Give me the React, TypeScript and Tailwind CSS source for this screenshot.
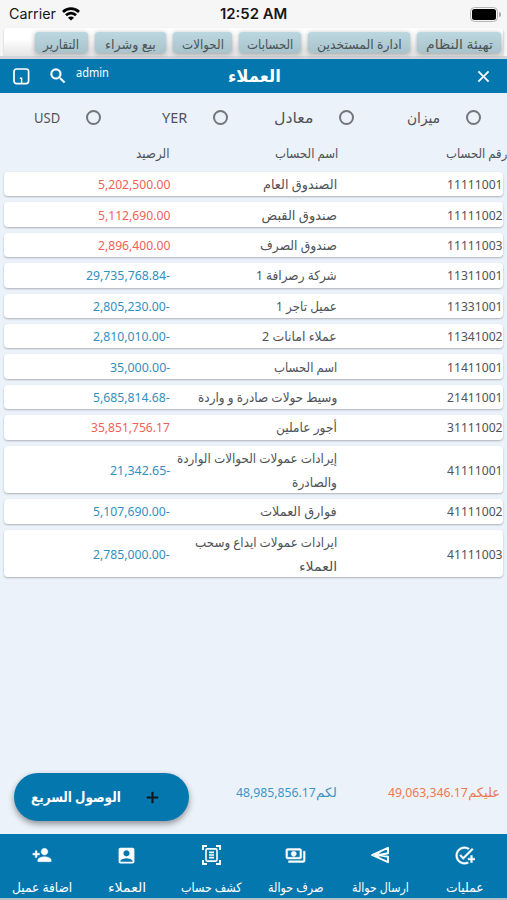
import { useLayoutEffect, useRef, useState, type ReactNode } from 'react';
import {
  MdAddTask, MdOutlinePayments, MdAccountBox, MdPersonAdd, MdSearch, MdClose, MdAdd,
} from 'react-icons/md';

/** One line of text, condensed or widened horizontally to a set width. */
function Fit({ w, children, ltr = false, className = '' }: { w: number; children: ReactNode; ltr?: boolean; className?: string }) {
  const ref = useRef<HTMLSpanElement>(null);
  const [s, setS] = useState(1);
  useLayoutEffect(() => {
    if (ref.current) setS(w / ref.current.offsetWidth);
  }, [w]);
  return (
    <span dir={ltr ? 'ltr' : 'rtl'} className={`block shrink-0 ${className}`} style={{ width: w }}>
      <span
        ref={ref}
        className={`inline-block whitespace-nowrap ${ltr ? 'origin-left' : 'origin-right'}`}
        style={{ transform: `scaleX(${s})` }}
      >
        {children}
      </span>
    </span>
  );
}

const SendIcon = () => (
  <svg width="20" height="20" viewBox="0 0 20 20" fill="none" stroke="#fff" strokeWidth="1.9" strokeLinejoin="round">
    <path d="M18 2.8 2 10l16 7.2v-5.4L9 10l9-1.8Z" />
    <path d="M11 7 3 10l8 3 -3-3Z" fill="#fff" stroke="none" />
  </svg>
);

const StatementIcon = () => (
  <svg width="19" height="20" viewBox="0 0 19 20" fill="none" stroke="#fff" strokeWidth="1.9">
    <path d="M1 5V1h4M14 1h4v4M18 15v4h-4M5 19H1v-4" />
    <rect x="4" y="3.9" width="11" height="12.2" rx="1.3" strokeWidth="1.6" />
    <path d="M7 7.4h5M7 10h5M7 12.6h5" strokeWidth="1.7" />
  </svg>
);

const chips: [string, number, number][] = [
  ['تهيئة النظام', 84, 67],
  ['ادارة المستخدين', 102, 85],
  ['الحسابات', 62, 46],
  ['الحوالات', 59, 42],
  ['بيع وشراء', 71, 51],
  ['التقارير', 53, 36],
];

const options: [string, number][] = [['ميزان', 33], ['معادل', 39], ['YER', 25], ['USD', 26]];

type Row = { no: string; name: [string, number][]; bal: string; w: number; red?: boolean };
const rows: Row[] = [
  { no: '11111001', name: [['الصندوق العام', 74]], bal: '5,202,500.00', w: 72, red: true },
  { no: '11111002', name: [['صندوق القبض', 76]], bal: '5,112,690.00', w: 72, red: true },
  { no: '11111003', name: [['صندوق الصرف', 77]], bal: '2,896,400.00', w: 72, red: true },
  { no: '11311001', name: [['شركة رصرافة 1', 81]], bal: '29,735,768.84-', w: 84 },
  { no: '11331001', name: [['عميل تاجر 1', 61]], bal: '2,805,230.00-', w: 77 },
  { no: '11341002', name: [['عملاء امانات 2', 75]], bal: '2,810,010.00-', w: 77 },
  { no: '11411001', name: [['اسم الحساب', 63]], bal: '35,000.00-', w: 60 },
  { no: '21411001', name: [['وسيط حولات صادرة و واردة', 139]], bal: '5,685,814.68-', w: 77 },
  { no: '31111002', name: [['أجور عاملين', 61]], bal: '35,851,756.17', w: 79, red: true },
  { no: '41111001', name: [['إيرادات عمولات الحوالات الواردة', 160], ['والصادرة', 45]], bal: '21,342.65-', w: 60 },
  { no: '41111002', name: [['فوارق العملات', 77]], bal: '5,107,690.00-', w: 77 },
  { no: '41111003', name: [['ايرادات عمولات ايداع وسحب', 142], ['العملاء', 38]], bal: '2,785,000.00-', w: 77 },
];

const tabs: [ReactNode, string, number][] = [
  [<MdAddTask size={21} className="[&>path:not([fill=none])]:stroke-white [&>path:not([fill=none])]:[stroke-width:0.5]" />, 'عمليات', 38],
  [<SendIcon />, 'ارسال حوالة', 57],
  [<MdOutlinePayments size={21} className="[&>path:not([fill=none])]:stroke-white [&>path:not([fill=none])]:[stroke-width:0.5]" />, 'صرف حوالة', 55],
  [<StatementIcon />, 'كشف حساب', 60],
  [<MdAccountBox size={21} />, 'العملاء', 38],
  [<MdPersonAdd size={20} className="[&>path:not([fill=none])]:stroke-white [&>path:not([fill=none])]:[stroke-width:0.5]" />, 'اضافة عميل', 60],
];

export default function App() {
  return (
    <div
      dir="rtl"
      className="flex h-[900px] w-[507px] flex-col overflow-hidden bg-[#ecf2fa] text-[14px] leading-[24px] text-[#505357] [font-family:'Noto_Sans','DejaVu_Sans',sans-serif]"
    >
      <div className="bg-[#f6f6f6]">
        <div dir="ltr" className="flex h-7 items-center justify-between pl-[9px] pr-[6px] text-[#161616] [font-family:Inter,sans-serif]">
          <div className="flex w-[158px] items-center gap-[6px]">
            <Fit ltr w={47} className="text-[14px]">Carrier</Fit>
            <svg width="18" height="14" viewBox="0 0 18 14" fill="none" stroke="#000" strokeWidth="2.7">
              <path d="M1 5a11.3 11.3 0 0 1 16 0" />
              <path d="M4 8.3a7 7 0 0 1 10 0" />
              <path d="M9 13.5 6 10.7a4.2 4.2 0 0 1 6 0Z" fill="#000" stroke="none" />
            </svg>
          </div>
          <Fit ltr w={67} className="text-[14px] font-semibold">12:52 AM</Fit>
          <div className="flex w-[162px] items-center justify-end gap-px">
            <div className="h-[15px] w-[28px] rounded-[4.5px] border-[1.5px] border-[#b5b5b5] p-px">
              <div className="h-full rounded-[2.5px] bg-black" />
            </div>
            <div className="h-[5px] w-[2px] rounded-r bg-[#aaa]" />
          </div>
        </div>
        <div className="mx-1 flex h-[28px] items-center gap-[7px] rounded-[3px] bg-linear-to-b from-white from-40% to-[#e4e4e4] pr-[2px] shadow-[0_1px_2px_#0004]">
          {chips.map(([t, w, tw]) => (
            <div
              key={t}
              className="flex h-[21px] shrink-0 items-center justify-center rounded-[3px] bg-linear-to-b from-[#bbd7df] to-[#a9c3cc] pt-[3px] text-[13px] text-[#4b5356] shadow-[0_1px_5px_#0005]"
              style={{ width: w }}
            >
              <Fit w={tw}>{t}</Fit>
            </div>
          ))}
        </div>
        <div className="h-[3px] bg-[#cfd5d9]" />
      </div>

      <header className="flex h-[34px] shrink-0 items-center bg-[#0577af] pl-[13px] pr-[14px] text-white">
        <div className="flex w-[171px] items-center">
          <MdClose size={19} className="[&>path:not([fill=none])]:stroke-white [&>path:not([fill=none])]:[stroke-width:0.5]" />
        </div>
        <div className="flex flex-1 justify-center">
          <Fit w={53} className="text-[17px] font-bold">العملاء</Fit>
        </div>
        <div dir="ltr" className="flex w-[173px] items-center">
          <svg width="17" height="17" viewBox="0 0 17 17" fill="none" stroke="#fff" strokeWidth="1.7">
            <rect x="1" y="1" width="14.6" height="14.6" rx="2.5" />
            <path d="M6.8 10.3h1.8V15" strokeWidth="1.4" />
          </svg>
          <MdSearch size={20} className="ml-[18px] [&>path:not([fill=none])]:stroke-white [&>path:not([fill=none])]:[stroke-width:0.5]" />
          <Fit ltr w={33} className="-mt-2 ml-2 text-[13px] leading-[20px]">admin</Fit>
        </div>
      </header>

      <div className="grid h-12 shrink-0 grid-cols-4 text-[15px]">
        {options.map(([t, w]) => (
          <div key={t} className="flex items-center pr-[26px]">
            <span className="size-[15px] shrink-0 rounded-full border-2 border-[#73767a]" />
            <Fit w={w} ltr={t < 'a'} className="mr-[26px]">{t}</Fit>
          </div>
        ))}
      </div>

      <div className="grid h-[31px] shrink-0 grid-cols-[169px_168px_1fr] text-[13px]">
        <Fit w={61}>رقم الحساب</Fit>
        <Fit w={63}>اسم الحساب</Fit>
        <Fit w={34}>الرصيد</Fit>
      </div>

      <div className="flex flex-1 flex-col gap-[6px] px-1 text-[13px]">
        {rows.map((r) => (
          <div
            key={r.no}
            className={`grid shrink-0 grid-cols-[166px_167px_1fr] items-center rounded-[4px] bg-white shadow-[0_1px_2px_#0004] ${r.name.length > 1 ? 'h-[47.7px]' : 'h-[24.4px]'}`}
          >
            <Fit ltr w={56}>{r.no}</Fit>
            <div>
              {r.name.map(([t, w]) => <Fit key={t} w={w}>{t}</Fit>)}
            </div>
            <Fit ltr w={r.w} className={r.red ? 'text-[#f25f57]' : 'text-[#3190c0]'}>{r.bal}</Fit>
          </div>
        ))}
      </div>

      <div className="flex h-[70px] shrink-0 items-start pl-[14px] pr-[7px] text-[13px]">
        <div className="flex w-[163px] pt-[16px] text-[#ee7850]">
          <Fit w={32}>عليكم</Fit><Fit ltr w={80}>49,063,346.17</Fit>
        </div>
        <div className="flex flex-1 pt-[16px] text-[#4095c5]">
          <Fit w={21}>لكم</Fit><Fit ltr w={80}>48,985,856.17</Fit>
        </div>
        <button className="mt-[9px] flex h-[48px] w-[175px] items-center rounded-full bg-[#0577af] pr-[27px] text-white shadow-[0_3px_6px_#0006]">
          <MdAdd size={19} className="text-[#101820] [&>path:not([fill=none])]:stroke-[#101820] [&>path:not([fill=none])]:[stroke-width:0.5]" />
          <Fit w={90} className="mr-[22px] text-[14px] font-bold">الوصول السريع</Fit>
        </button>
      </div>

      <nav className="grid h-[64px] shrink-0 grid-cols-6 bg-[#0577af] text-[13px] text-white">
        {tabs.map(([icon, t, w]) => (
          <div key={t} className="flex flex-col items-center">
            <div className="flex h-[42px] items-center">{icon}</div>
            <Fit w={w} className="leading-[22px]">{t}</Fit>
          </div>
        ))}
      </nav>
      <div className="h-[2px] shrink-0 bg-[#b5bfc5]" />
    </div>
  );
}
